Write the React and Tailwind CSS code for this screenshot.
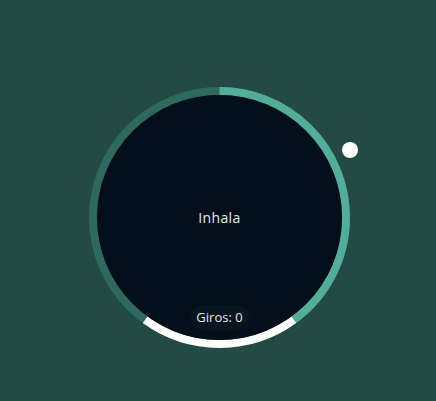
import React from "react";

// Círculo de respiración con progreso y contador de giros
const BreathCircle = ({ phase = "Inhala", turns = 0, progress = 144 }) => {
  return (
    <div className="relative h-[261px] w-[261px] p-2">
      <svg className="absolute inset-0 h-full w-full -rotate-90" viewBox="0 0 261 261">
        <circle cx="130.5" cy="130.5" r="126.5" fill="none" stroke="#2d6a5d" strokeWidth="8" />
        <circle
          cx="130.5"
          cy="130.5"
          r="126.5"
          fill="none"
          stroke="#52ae9b"
          strokeWidth="8"
          pathLength="360"
          strokeDasharray={`${progress} 360`}
        />
        <circle
          cx="130.5"
          cy="130.5"
          r="126.5"
          fill="none"
          stroke="#ffffff"
          strokeWidth="8"
          pathLength="360"
          strokeDasharray="72 360"
          strokeDashoffset="-144"
        />
      </svg>

      <div className="relative flex h-full w-full items-center justify-center rounded-full bg-[#020f1b]">
        <span className="text-[14px] font-medium tracking-wide text-gray-200">{phase}</span>
        <div className="absolute bottom-[10px] left-1/2 -translate-x-1/2 rounded-full bg-[#07151f] px-[7px] py-[3px] text-[13px] font-medium text-gray-200">
          Giros: {turns}
        </div>
      </div>

      <div className="absolute left-[253px] top-[55px] h-4 w-4 rounded-full bg-white" />
    </div>
  );
};

export default function App() {
  return (
    <div
      className="flex h-[401px] w-full justify-center bg-[#244b43] pl-[3px] pt-[87px]"
      style={{ fontFamily: '"Open Sans", "Noto Sans", sans-serif' }}
    >
      <BreathCircle />
    </div>
  );
}
